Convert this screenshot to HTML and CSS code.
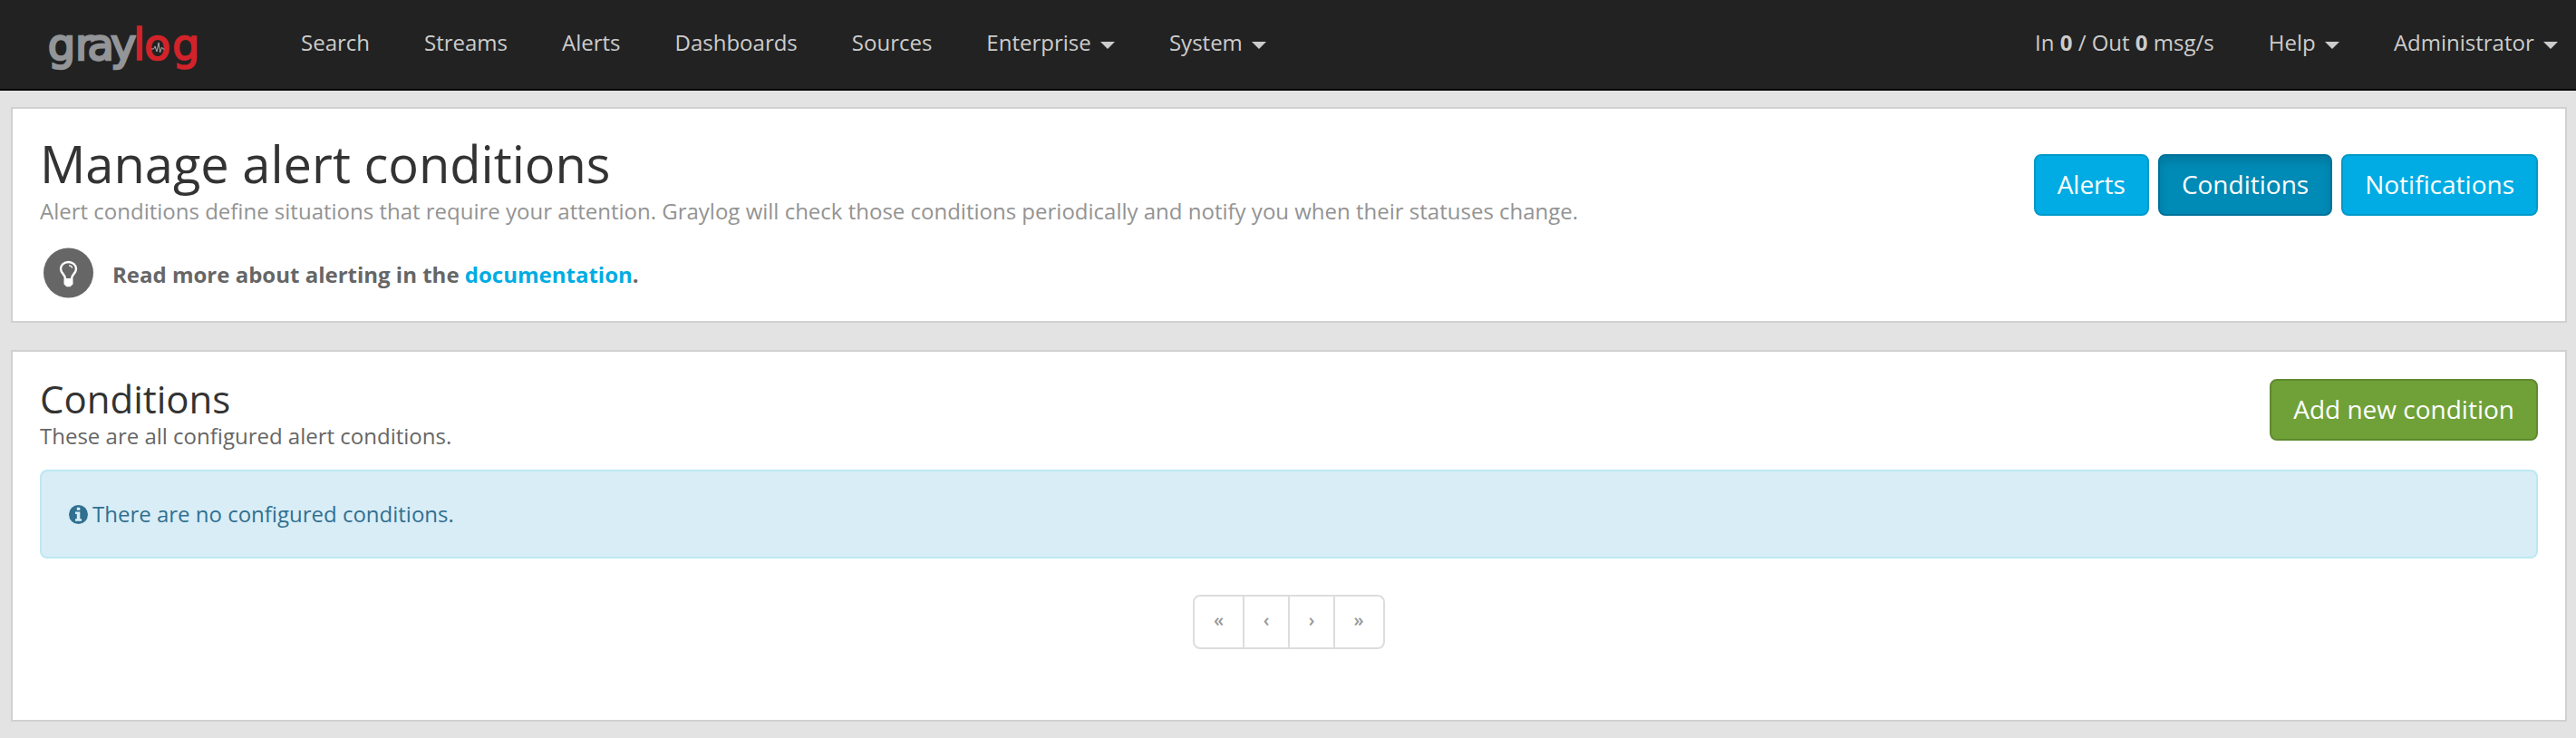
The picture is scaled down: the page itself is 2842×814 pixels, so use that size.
FILE: index.html
```html
<!DOCTYPE html>
<html lang="en">
<head>
<meta charset="utf-8">
<title>Manage alert conditions</title>
<link rel="stylesheet" href="styles.css">
</head>
<body>
<nav class="navbar">
  <a class="brand" href="#">
    <svg class="logo" width="180" height="66" viewBox="0 0 180 66" role="img" aria-label="graylog">
      <text y="44"><tspan class="logo-gray" x="0.700 31 44.500 70">gray</tspan><tspan class="logo-log" x="95 107 138">log</tspan></text>
      <path class="pulse" d="M115 32h2.500l1.500-3 2 6 2-10 1.500 11 2-6 1 2h2"/>
    </svg>
  </a>
  <ul class="menu">
    <li>Search</li>
    <li>Streams</li>
    <li>Alerts</li>
    <li>Dashboards</li>
    <li>Sources</li>
    <li>Enterprise <span class="caret"></span></li>
    <li>System <span class="caret"></span></li>
  </ul>
  <ul class="menu menu-right">
    <li>In <b>0</b> / Out <b>0</b> msg/s</li>
    <li>Help <span class="caret"></span></li>
    <li>Administrator <span class="caret"></span></li>
  </ul>
</nav>
<main class="page">
  <section class="card header-card">
    <div class="intro">
      <h1>Manage alert conditions</h1>
      <p class="description">Alert conditions define situations that require your attention. Graylog will check those conditions periodically and notify you when their statuses change.</p>
      <p class="support">
        <svg class="bulb" width="56" height="56" viewBox="0 0 56 56">
          <circle cx="27.500" cy="28" r="27.500" fill="#666"/>
          <path d="M24 34c0-4-5-5.500-5-10.500a8.500 7.500 0 0 1 17 0c0 5-5 6.500-5 10.500" fill="none" stroke="#fff" stroke-width="2.400"/>
          <path d="M28 19.800c2 0 3.500 1 3.500 3" fill="none" stroke="#fff" stroke-width="1.300"/>
          <path d="M22.500 34h10v6.500l-3 2.800h-4l-3-2.800z" fill="#fff"/>
        </svg>
        <strong>Read more about alerting in the <a href="#">documentation</a>.</strong>
      </p>
    </div>
    <div class="actions">
      <a class="btn btn-info" href="#">Alerts</a>
      <a class="btn btn-info active" href="#">Conditions</a>
      <a class="btn btn-info" href="#">Notifications</a>
    </div>
  </section>
  <section class="card list-card">
    <div class="list-head">
      <div>
        <h2>Conditions</h2>
        <p class="subtitle">These are all configured alert conditions.</p>
      </div>
      <a class="btn btn-success" href="#">Add new condition</a>
    </div>
    <div class="alert">
      <svg class="info" width="21" height="21" viewBox="0 0 21 21">
        <circle cx="10.500" cy="10.500" r="10.500" fill="#31708f"/>
        <path d="M8.800 2.700h3.500v3H8.800zM7 7.500h5.300v7.800H14v2.500H7v-2.500h1.800V10H7z" fill="#d9edf7"/>
      </svg>
      <span>There are no configured conditions.</span>
    </div>
    <ul class="pagination">
      <li class="wide">«</li>
      <li>‹</li>
      <li>›</li>
      <li class="wide">»</li>
    </ul>
  </section>
</main>
</body>
</html>
```
FILE: styles.css
```css
* { box-sizing: border-box; }
body {
  margin: 0;
  background: #e3e3e3;
  color: #666;
  font: 24px/34px "Open Sans", "Noto Sans", sans-serif;
}
h1, h2, p, ul { margin: 0; padding: 0; }
ul { list-style: none; }
a { color: #00ace3; text-decoration: none; }
.navbar {
  display: flex;
  height: 100px;
  padding-left: 52px;
  background: #222;
  border-bottom: 2px solid #080808;
  color: #ccc;
}
.brand { width: 250px; padding-top: 22px; }
.logo { display: block; overflow: visible; }
.logo text { font-family: "DejaVu Sans", sans-serif; font-size: 48px; }
.logo-gray { fill: #939598; stroke: #939598; stroke-width: 2.4px; }
.logo-log { fill: #d2232a; stroke: #d2232a; stroke-width: 1.6px; }
.pulse { fill: none; stroke: #aaa; stroke-width: 1; }
.menu { display: flex; }
.menu li { padding: 30px 30px 0; white-space: nowrap; }
.menu-right { margin-left: auto; }
.menu-right li:last-child { padding-right: 20px; }
.caret {
  display: inline-block;
  margin-left: 4px;
  vertical-align: middle;
  border-top: 8px solid #ccc;
  border-left: 8px solid transparent;
  border-right: 8px solid transparent;
}
.page { padding: 18px 10px 0 12px; }
.card {
  background: #fff;
  border: 2px solid #d1d1d1;
  padding: 0 30px;
}
.header-card { display: flex; justify-content: space-between; height: 238px; margin-bottom: 30px; }
h1, h2 { color: #333; font-weight: 400; }
h1 { padding-top: 29px; font-size: 56px; line-height: 62px; }
.description { margin-top: 5px; color: #939393; }
.support { display: flex; align-items: center; gap: 20px; margin-top: 23px; padding-left: 4px; }
.support strong { padding-top: 3px; }
.actions { display: flex; gap: 10px; padding-top: 50px; }
.btn {
  height: 68px;
  padding: 13px 24px;
  border: 2px solid;
  border-radius: 8px;
  color: #fff;
  font-size: 28px;
  line-height: 36px;
  white-space: nowrap;
}
.btn-info { background: #00ace3; border-color: #0099ca; }
.btn-info.active { background: #008ab6; border-color: #00729a; box-shadow: inset 0 6px 10px rgba(0, 0, 0, .125); }
.btn-success { background: #70a138; border-color: #5f8a2f; }
.list-card { height: 410px; }
.list-head { display: flex; justify-content: space-between; padding-top: 29px; height: 130px; }
.list-head .btn { margin-top: 1px; }
h2 { font-size: 42px; line-height: 46px; }
.subtitle { padding-top: 1px; line-height: 34px; }
.alert {
  display: flex;
  align-items: center;
  gap: 5px;
  height: 98px;
  padding: 0 30px;
  border: 2px solid #bce8f1;
  border-radius: 8px;
  background: #d9edf7;
  color: #31708f;
}
.pagination {
  display: flex;
  width: 212px;
  height: 60px;
  margin: 40px auto 0;
  border: 2px solid #ddd;
  border-radius: 8px;
  color: #999;
  font-size: 20px;
  font-weight: 600;
}
.pagination li { width: 50px; padding-top: 9px; text-align: center; }
.pagination .wide { width: 54px; }
.pagination .wide:first-child { width: 53px; }
.pagination li + li { border-left: 2px solid #ddd; }
```
